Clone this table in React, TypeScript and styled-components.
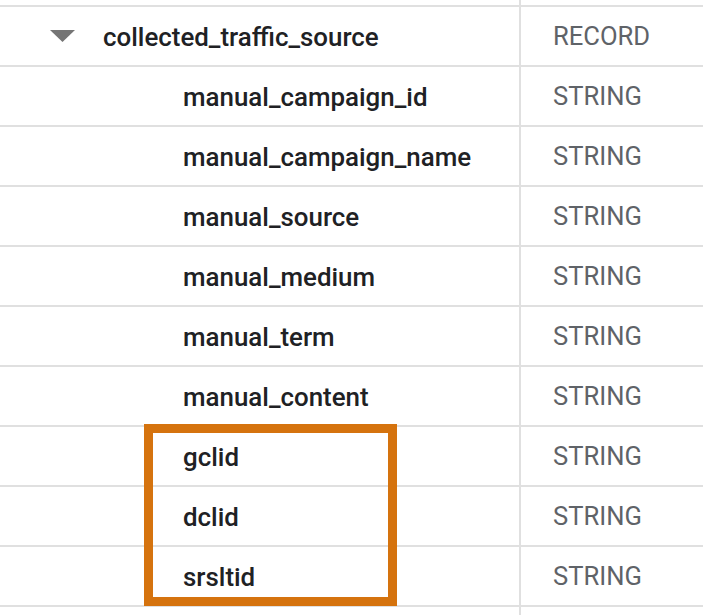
import React from "react";
import styled, { createGlobalStyle } from "styled-components";

const Global = createGlobalStyle`
  html, body { margin: 0; padding: 0; background: #ffffff; }
  body { font-family: Roboto, "Noto Sans", Arial, sans-serif; overflow: hidden; }
`;

const Table = styled.div`
  position: relative;
  width: 703px;
  height: 615px;
  padding-top: 5px;
  box-sizing: border-box;
  display: flex;
  flex-direction: column;
  overflow: hidden;
  &::before {
    content: "";
    position: absolute;
    left: 519px;
    top: 0;
    bottom: 0;
    width: 2px;
    background: #e0e0e0;
  }
`;

const Row = styled.div`
  display: grid;
  grid-template-columns: 521px 1fr;
  height: 60px;
  border-top: 2px solid #e0e0e0;
  box-sizing: border-box;
  flex-shrink: 0;
`;

const NameCell = styled.div<{ $level: number }>`
  display: flex;
  align-items: center;
  padding-left: ${(p) => (p.$level === 0 ? 50 : 183)}px;
  font-size: 25.9px;
  font-weight: 500;
  color: #202124;
  gap: 28px;
  padding-top: 1px;
`;

const TypeCell = styled.div`
  display: flex;
  align-items: center;
  padding-left: 32px;
  font-size: 25.6px;
  font-weight: 400;
  color: #5f6368;
`;

const Caret = styled.svg`
  width: 25px;
  height: 12px;
  flex-shrink: 0;
  margin-top: -2px;
`;

const Group = styled.div`
  position: relative;
  display: flex;
  flex-direction: column;
`;

const Highlight = styled.div`
  position: absolute;
  left: 144px;
  top: -1px;
  width: 253px;
  height: 182px;
  border: 9px solid #d5730e;
  box-sizing: border-box;
  pointer-events: none;
`;

type Field = { name: string; type: string; level: number };

const before: Field[] = [
  { name: "collected_traffic_source", type: "RECORD", level: 0 },
  { name: "manual_campaign_id", type: "STRING", level: 1 },
  { name: "manual_campaign_name", type: "STRING", level: 1 },
  { name: "manual_source", type: "STRING", level: 1 },
  { name: "manual_medium", type: "STRING", level: 1 },
  { name: "manual_term", type: "STRING", level: 1 },
  { name: "manual_content", type: "STRING", level: 1 },
];

const highlighted: Field[] = [
  { name: "gclid", type: "STRING", level: 1 },
  { name: "dclid", type: "STRING", level: 1 },
  { name: "srsltid", type: "STRING", level: 1 },
];

function FieldRow({ f }: { f: Field }) {
  return (
    <Row>
      <NameCell $level={f.level}>
        {f.level === 0 && (
          <Caret viewBox="0 0 25 12">
            <path d="M0 0 L25 0 L12.5 12 Z" fill="#757575" />
          </Caret>
        )}
        <span>{f.name}</span>
      </NameCell>
      <TypeCell>{f.type}</TypeCell>
    </Row>
  );
}

export default function App() {
  return (
    <>
      <Global />
      <Table>
        {before.map((f) => (
          <FieldRow key={f.name} f={f} />
        ))}
        <Group>
          {highlighted.map((f) => (
            <FieldRow key={f.name} f={f} />
          ))}
          <Highlight />
        </Group>
        <Row />
      </Table>
    </>
  );
}
